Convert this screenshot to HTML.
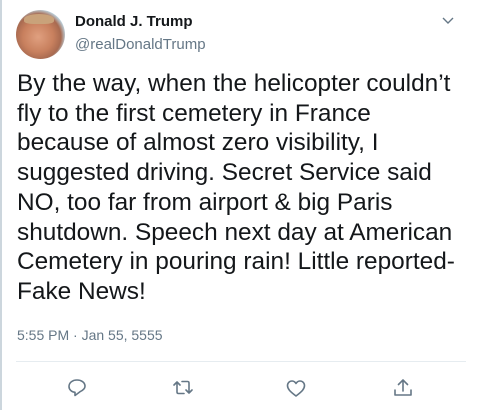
<!DOCTYPE html>
<html><head><meta charset="utf-8"><style>
body{margin:0;width:480px;height:410px;background:#fff;position:relative;overflow:hidden;font-family:"Liberation Sans",Arial,sans-serif}
.lb{position:absolute;left:0;top:0;width:2px;height:410px;background:#ccd6dd}
.av{position:absolute;left:16px;top:10px;width:49px;height:49px;border-radius:50%;background:radial-gradient(circle at 45% 55%,#e0a080 0,#c8805e 40%,#a86a50 60%,#bfe3f5 75%)}
.av:before{content:"";position:absolute;left:8px;top:4px;width:30px;height:10px;border-radius:50% 50% 30% 30%;background:#c9a27a}
.name{position:absolute;left:75px;top:13px;font-weight:bold;font-size:15px;color:#14171a}
.handle{position:absolute;left:75px;top:36px;font-size:15px;color:#657786}
.chev{position:absolute;left:441px;top:16px}
.txt{position:absolute;left:17px;top:69px;width:470px;font-size:24.4px;line-height:29.7px;color:#14171a;white-space:nowrap}
.ts{position:absolute;left:17px;top:327px;font-size:14px;color:#657786}
.div{position:absolute;left:16px;top:361px;width:450px;height:1px;background:#e6ecf0}
svg.i{position:absolute;top:376px}
</style></head><body>
<div class="lb"></div>
<div class="av"></div>
<div class="name">Donald J. Trump</div>
<div class="handle">@realDonaldTrump</div>
<svg class="chev" width="14" height="10"><path d="M2 2l5 5 5-5" fill="none" stroke="#657786" stroke-width="1.4"/></svg>
<div class="txt">By the way, when the helicopter couldn’t<br>fly to the first cemetery in France<br>because of almost zero visibility, I<br>suggested driving. Secret Service said<br>NO, too far from airport &amp; big Paris<br>shutdown. Speech next day at American<br>Cemetery in pouring rain! Little reported-<br>Fake News!</div>
<div class="ts">5:55 PM · Jan 55, 5555</div>
<div class="div"></div>
<svg class="i" style="left:64px" width="26" height="24" viewBox="0 0 26 24"><path d="M13 4c-5 0-8 3-8 6.5 0 3 2.5 5.5 6 5.8v3.2l5-3.8c2.5-1.2 5-3 5-5.5C21 7 18 4 13 4z" fill="none" stroke="#657786" stroke-width="1.6" stroke-linejoin="round"/></svg>
<svg class="i" style="left:170px" width="26" height="24" viewBox="0 0 26 24"><path d="M4 9l3-3 3 3M7 6v10c0 1 .5 1.5 1.5 1.5H14M22 14l-3 3-3-3M19 17V7c0-1-.5-1.5-1.5-1.5H12" fill="none" stroke="#657786" stroke-width="1.6" stroke-linecap="round" stroke-linejoin="round"/></svg>
<svg class="i" style="left:283px" width="26" height="24" viewBox="0 0 26 24"><path d="M13 20C7 15.5 4.5 13 4.5 9.5 4.5 7 6.5 5 9 5c2 0 3.2 1.2 4 2.5C13.8 6.2 15 5 17 5c2.5 0 4.5 2 4.5 4.5 0 3.5-2.5 6-8.5 10.5z" fill="none" stroke="#657786" stroke-width="1.6" stroke-linejoin="round"/></svg>
<svg class="i" style="left:390px" width="26" height="24" viewBox="0 0 26 24"><path d="M13 15V4M8.5 8.5L13 4l4.5 4.5M5 14v5h16v-5" fill="none" stroke="#657786" stroke-width="1.6" stroke-linecap="round" stroke-linejoin="round"/></svg>
</body></html>
